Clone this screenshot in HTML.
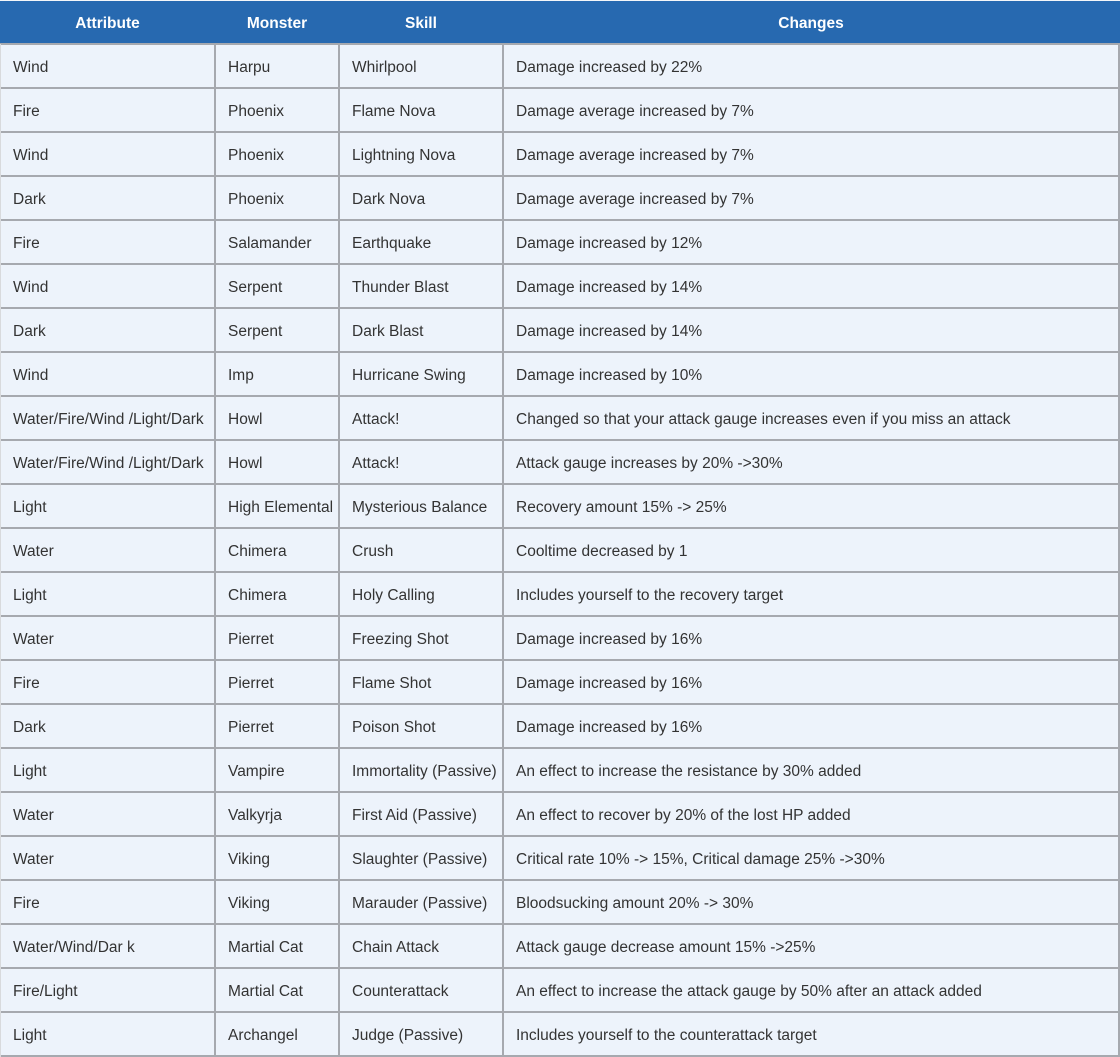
<!DOCTYPE html>
<html><head><meta charset="utf-8"><style>
*{margin:0;padding:0;box-sizing:border-box}
html,body{width:1120px;height:1057px;overflow:hidden}
body{background:#a6a9af;position:relative;font-family:"Liberation Sans",Arial,sans-serif;font-size:15.5px;color:#333}
.top{position:absolute;left:0;top:0;width:1120px;height:1px;background:#f4f6f9}
.lft{position:absolute;left:0;top:44px;width:1px;height:1013px;background:#d8dadd}
.hd{position:absolute;top:1px;height:42px;background:#2769b0;color:#fff;font-weight:bold;text-align:center;line-height:46px;font-size:15.5px;overflow:hidden}
.c{position:absolute;height:42px;background:#edf3fb;line-height:46px;padding-left:12px;white-space:nowrap;overflow:hidden}
</style></head><body>
<div class="top"></div>
<div class="hd" style="left:0;width:1120px"></div>
<div class="hd" style="left:1px;width:213px">Attribute</div>
<div class="hd" style="left:216px;width:122px">Monster</div>
<div class="hd" style="left:340px;width:162px">Skill</div>
<div class="hd" style="left:504px;width:614px">Changes</div>
<div class="lft"></div>
<div id="rows"></div>
<script>
var d=[["Wind","Harpu","Whirlpool","Damage increased by 22%"],
["Fire","Phoenix","Flame Nova","Damage average increased by 7%"],
["Wind","Phoenix","Lightning Nova","Damage average increased by 7%"],
["Dark","Phoenix","Dark Nova","Damage average increased by 7%"],
["Fire","Salamander","Earthquake","Damage increased by 12%"],
["Wind","Serpent","Thunder Blast","Damage increased by 14%"],
["Dark","Serpent","Dark Blast","Damage increased by 14%"],
["Wind","Imp","Hurricane Swing","Damage increased by 10%"],
["Water/Fire/Wind /Light/Dark","Howl","Attack!","Changed so that your attack gauge increases even if you miss an attack"],
["Water/Fire/Wind /Light/Dark","Howl","Attack!","Attack gauge increases by 20% ->30%"],
["Light","High Elemental","Mysterious Balance","Recovery amount 15% -> 25%"],
["Water","Chimera","Crush","Cooltime decreased by 1"],
["Light","Chimera","Holy Calling","Includes yourself to the recovery target"],
["Water","Pierret","Freezing Shot","Damage increased by 16%"],
["Fire","Pierret","Flame Shot","Damage increased by 16%"],
["Dark","Pierret","Poison Shot","Damage increased by 16%"],
["Light","Vampire","Immortality (Passive)","An effect to increase the resistance by 30% added"],
["Water","Valkyrja","First Aid (Passive)","An effect to recover by 20% of the lost HP added"],
["Water","Viking","Slaughter (Passive)","Critical rate 10% -> 15%, Critical damage 25% ->30%"],
["Fire","Viking","Marauder (Passive)","Bloodsucking amount 20% -> 30%"],
["Water/Wind/Dar k","Martial Cat","Chain Attack","Attack gauge decrease amount 15% ->25%"],
["Fire/Light","Martial Cat","Counterattack","An effect to increase the attack gauge by 50% after an attack added"],
["Light","Archangel","Judge (Passive)","Includes yourself to the counterattack target"]];
var x=[1,216,340,504],w=[213,122,162,614],h="";
for(var i=0;i<d.length;i++){var t=45+44*i;for(var j=0;j<4;j++){h+='<div class="c" style="left:'+x[j]+'px;top:'+t+'px;width:'+w[j]+'px">'+d[i][j].replace(/&/g,"&amp;").replace(/</g,"&lt;").replace(/>/g,"&gt;")+'</div>';}}
document.getElementById("rows").innerHTML=h;
</script>
</body></html>
